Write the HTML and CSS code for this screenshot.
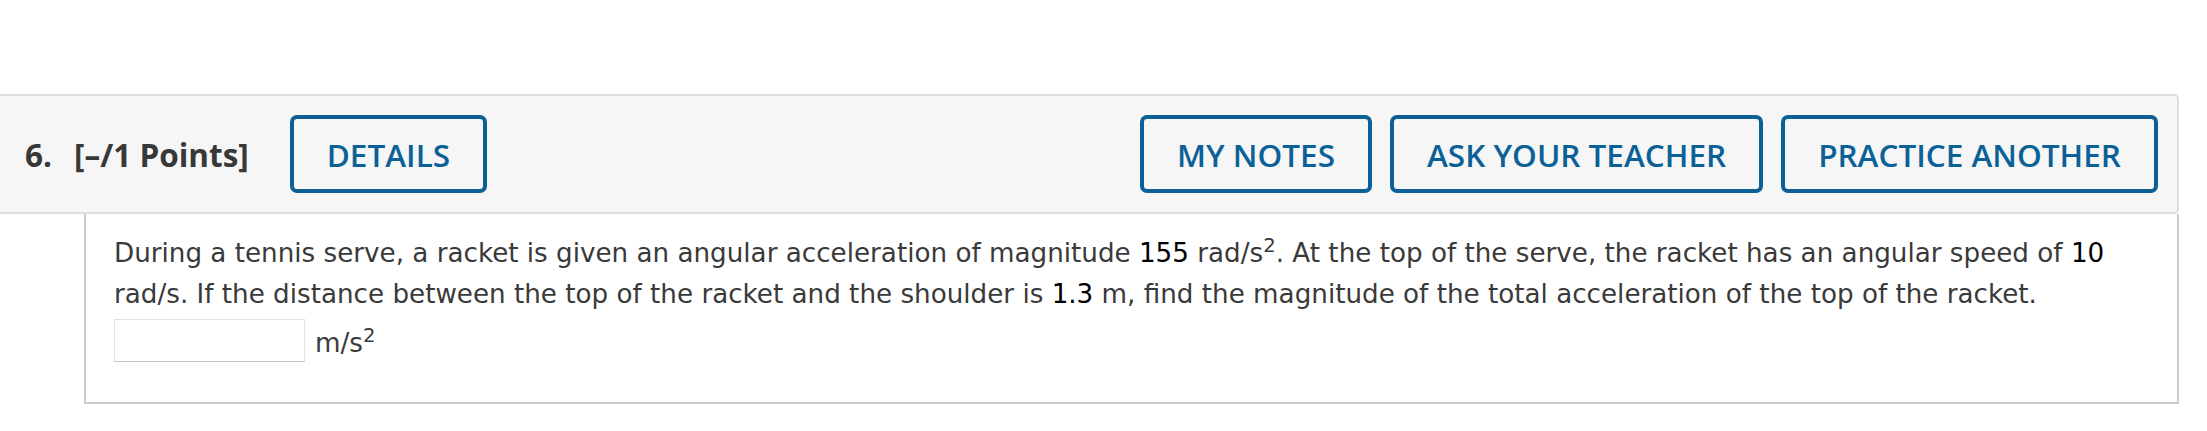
FILE: index.html
```html
<!DOCTYPE html>
<html lang="en">
<head>
  <meta charset="UTF-8">
  <title>Question 6</title>
  <link rel="stylesheet" href="styles.css">
</head>
<body>
  <div class="question">
    <div class="q-header">
      <span class="q-num">6.</span>
      <span class="q-points">[–/1 Points]</span>
      <button class="q-btn q-details">DETAILS</button>
      <div class="q-actions">
        <button class="q-btn">MY NOTES</button>
        <button class="q-btn">ASK YOUR TEACHER</button>
        <button class="q-btn">PRACTICE ANOTHER</button>
      </div>
    </div>

    <div class="q-body">
      <p class="q-text">During a tennis serve, a racket is given an angular acceleration of magnitude <span class="num">155</span> rad/s<sup>2</sup>. At the top of the serve, the racket has an angular speed of <span class="num">10</span> rad/s. If the distance between the top of the racket and the shoulder is <span class="num">1.3</span> m, find the magnitude of the total acceleration of the top of the racket.</p>
      <div class="answer">
        <input type="text" class="answer-input">
        <span class="unit">m/s<sup>2</sup></span>
      </div>
    </div>
  </div>
</body>
</html>
```

FILE: styles.css
```css
body {
  margin: 0;
  padding-top: 94px;
  background-color: #fff;
}
.question {
  width: 2179px;
}
.q-header {
  display: flex;
  align-items: center;
  height: 120px;
  box-sizing: border-box;
  padding: 0 19px 0 25px;
  background-color: #f6f6f6;
  border: 2px solid #ddd;
  border-left: none;
  border-radius: 0 5px 5px 0;
}
.q-num,
.q-points {
  font-family: "Open Sans", sans-serif;
  font-weight: 700;
  font-size: 31.5px;
  color: #383838;
}
.q-points {
  margin-left: 22px;
}
.q-btn {
  height: 78px;
  padding: 0 33px;
  background: transparent;
  border: 4px solid #0b6196;
  border-radius: 7px;
  font-family: "Open Sans", sans-serif;
  font-weight: 600;
  font-size: 31.5px;
  color: #0b6196;
  cursor: pointer;
}
.q-details {
  margin-left: 41px;
}
.q-actions {
  display: flex;
  gap: 18px;
  margin-left: auto;
}
.q-body {
  margin-left: 84px;
  padding: 19px 28px 40px;
  border: 2px solid #ccc;
  border-top: none;
}
.q-text {
  margin: 0;
  font-family: "DejaVu Sans", Verdana, sans-serif;
  font-size: 26.2px;
  line-height: 41px;
  color: #3a3a3a;
}
.num {
  color: #000;
}
sup {
  font-size: 0.75em;
  line-height: 0;
}
.answer {
  display: flex;
  align-items: center;
  gap: 10px;
  margin-top: 4px;
}
.answer-input {
  width: 191px;
  height: 43px;
  box-sizing: border-box;
  margin: 0;
  border: 1px solid #e2e2e2;
  border-bottom-color: #c4c4c4;
  background: #fff;
}
.unit {
  padding-top: 4px;
  font-family: "DejaVu Sans", Verdana, sans-serif;
  font-size: 26.2px;
  color: #3a3a3a;
}
```
